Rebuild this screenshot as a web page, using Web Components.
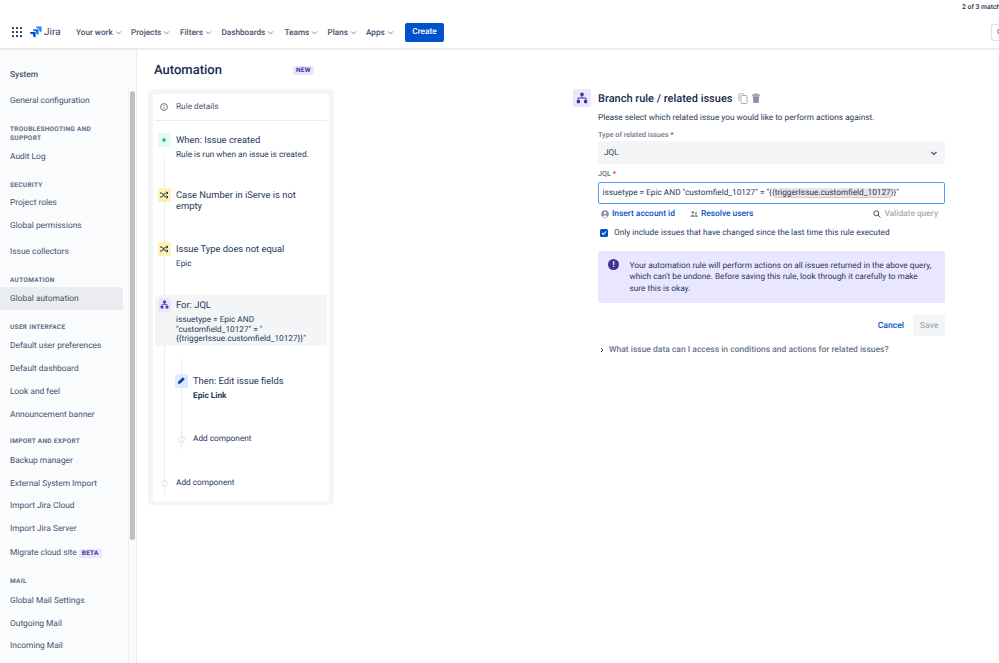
<!DOCTYPE html>
<html lang="en"><head><meta charset="utf-8"><title>Automation</title>
<style>
html,body{margin:0;padding:0;width:999px;height:663px;overflow:hidden;background:#fff;font-family:Roboto,"Liberation Sans",sans-serif;color:#172b4d;text-rendering:geometricPrecision}
jira-app{display:block}
</style></head><body>
<jira-app></jira-app>
<script>
function def(name, css, html){
  customElements.define(name, class extends HTMLElement{
    connectedCallback(){
      if(this.shadowRoot) return;
      const r=this.attachShadow({mode:'open'});
      const a=k=>this.getAttribute(k)||'';
      r.innerHTML='<style>'+css+'</style>'+(typeof html==='function'?html(a):html);
    }
  });
}
const chev='<svg width="7" height="7" viewBox="0 0 8 8" fill="none" stroke="#6b778c" stroke-width="1" style="flex:none"><path d="M1.2 2.8 4 5.6l2.8-2.8"/></svg>';

def('nav-link',':host{display:inline-flex;align-items:center;gap:2px;font-size:8.200px;font-weight:500;color:#42526e;white-space:nowrap;padding-top:1px}',
  a=>'<slot></slot>'+chev);

def('jira-header',`
:host{display:block;height:50px;box-sizing:border-box;border-bottom:2px solid #ebecf0;background:#fff;overflow:hidden}
.strip{height:14px;font-size:6.800px;line-height:14px;color:#172b4d;white-space:nowrap;padding-left:962px;box-sizing:border-box;font-weight:500}
.bar{height:36px;display:flex;align-items:center}
.grid{margin-left:12px;display:grid;grid-template-columns:repeat(3,2.4px);gap:1.4px;width:10px;flex:none}
.grid i{width:2.4px;height:2.4px;background:#253858;border-radius:.5px}
.logo{display:flex;align-items:center;margin-left:7px;gap:2px;font-size:10px;color:#344563;width:30px;flex:none;font-weight:400}
.logo svg{flex:none}
nav{display:flex;margin-left:17px;flex:1;align-items:center}
nav-link:nth-child(1){width:55px}nav-link:nth-child(2){width:49px}nav-link:nth-child(3){width:41.5px}nav-link:nth-child(4){width:63px}nav-link:nth-child(5){width:43px}nav-link:nth-child(6){width:38.5px}nav-link:nth-child(7){width:39px}
.create{background:#0052cc;color:#fff;border:0;border-radius:2px;width:39px;height:19px;font:500 8.4px Roboto,sans-serif;padding:0;text-rendering:geometricPrecision}
.search{flex:none;width:8px;height:17px;box-sizing:border-box;border:1px solid #dfe1e6;border-right:0;border-radius:3px 0 0 3px;display:flex;align-items:center;padding-left:5px;overflow:hidden}
`,`<div class="strip">2 of 3 match</div>
<div class="bar"><div class="grid">${'<i></i>'.repeat(9)}</div>
<div class="logo"><svg width="13" height="12" viewBox="0 0 13 12"><path d="M7 .5h5.600v5.400c-1.600 0-2.600-1-2.600-2.400V2.600H8.500C7.800 2.600 7 1.800 7 .5Z" fill="#2684ff"/><path d="M4 3.200h5.600v5.400C8 8.600 7 7.600 7 6.200V5.300H5.500C4.800 5.300 4 4.500 4 3.200Z" fill="#1a6fe8"/><path d="M1 6h5.600v5.500C5 11.500 4 10.500 4 9.100V8.100H2.500C1.800 8.100 1 7.300 1 6Z" fill="#0052cc"/></svg><span>Jira</span></div>
<nav><nav-link>Your work</nav-link><nav-link>Projects</nav-link><nav-link>Filters</nav-link><nav-link>Dashboards</nav-link><nav-link>Teams</nav-link><nav-link>Plans</nav-link><nav-link>Apps</nav-link><button class="create">Create</button></nav>
<div class="search"><svg width="8" height="8" viewBox="0 0 8 8" fill="none" stroke="#6b778c" stroke-width="1" style="flex:none"><circle cx="3.500" cy="3.500" r="2.800"/></svg></div></div>`);

def('side-head',':host{display:block;font-size:6.500px;line-height:9px;font-weight:700;color:#5e6c84;letter-spacing:.3px;text-transform:uppercase;padding:0 10px;width:100px}','<slot></slot>');
def('side-item',`:host{display:flex;align-items:center;height:22.8px;margin:0 13px 0 0;padding:0 0 0 10px;font-size:8.400px;color:#42526e;white-space:nowrap;border-radius:2px}
:host([active]){background:#ebecf0}
`,'<slot></slot>');
def('mini-badge',`:host{display:inline-block;background:#eae6ff;color:#403294;font-size:6.500px;font-weight:700;line-height:9px;padding:0 3px;border-radius:2px;letter-spacing:.2px}`,'<slot></slot>');

def('side-bar',`
:host{display:block;width:137px;flex:none;height:613px;box-sizing:border-box;background:#fafbfc;border-right:1px solid #ebecf0;position:relative;overflow:hidden;padding-top:18.500px}
.title{font-size:8.400px;font-weight:500;color:#42526e;padding-left:10px;line-height:12px;margin-bottom:9.500px}
.thumb{position:absolute;left:130px;top:41px;width:5px;height:449px;background:#bfbfbf;border-radius:3px}
.track{position:absolute;left:128px;top:38px;width:8px;bottom:0;border-left:1px solid #f0f1f3}
side-head{margin-top:12px;margin-bottom:2.500px}
.m1{margin-top:3px}
`,`<div class="title">System</div>
<side-item>General configuration</side-item>
<side-head>Troubleshooting and support</side-head>
<side-item>Audit Log</side-item>
<side-head style="margin-top:12.500px;margin-bottom:2.500px">Security</side-head>
<side-item>Project roles</side-item>
<side-item>Global permissions</side-item>
<side-item class="m1">Issue collectors</side-item>
<side-head style="margin-top:13px;margin-bottom:2px">Automation</side-head>
<side-item active>Global automation</side-item>
<side-head style="margin-top:12.500px;margin-bottom:3px">User interface</side-head>
<side-item>Default user preferences</side-item>
<side-item>Default dashboard</side-item>
<side-item>Look and feel</side-item>
<side-item>Announcement banner</side-item>
<side-head style="margin-top:11.500px;margin-bottom:3px">Import and export</side-head>
<side-item>Backup manager</side-item>
<side-item>External System Import</side-item>
<side-item>Import Jira Cloud</side-item>
<side-item>Import Jira Server</side-item>
<side-item style="margin-top:1px">Migrate cloud site&nbsp;<mini-badge>BETA</mini-badge></side-item>
<side-head style="margin-top:13px;margin-bottom:3px">Mail</side-head>
<side-item>Global Mail Settings</side-item>
<side-item>Outgoing Mail</side-item>
<side-item>Incoming Mail</side-item>
<div class="track"></div><div class="thumb"></div>`);

const icons={
 plus:'<svg width="8" height="8" viewBox="0 0 8 8"><path d="M4 1.800v4.400M1.800 4h4.400" stroke="#00875a" stroke-width=".9"/></svg>',
 shuffle:'<svg width="10" height="10" viewBox="0 0 10 10" fill="none" stroke="#172b4d" stroke-width="1"><path d="M1 3h1.800l3.600 4H9M1 7h1.800l3.600-4H9"/><path d="M7.600 1.700 9 3 7.600 4.300M7.600 5.700 9 7 7.600 8.300"/></svg>',
 branch:'<svg width="9" height="9" viewBox="0 0 9 9" fill="#5243aa"><rect x="3.100" y=".6" width="2.800" height="2.800" rx=".6"/><rect x=".6" y="5.700" width="2.800" height="2.800" rx=".6"/><rect x="5.600" y="5.700" width="2.800" height="2.800" rx=".6"/><path d="M4.100 3h.8v1.300h1.900l.6.300v1.600h-.8V5.100H2.400v1.100h-.8V4.600l.6-.3h1.900z"/></svg>',
 pen:'<svg width="9" height="9" viewBox="0 0 9 9" fill="#0747a6"><path d="M5.800 1.200 7.800 3.200 3.400 7.600 1 8 1.400 5.600z"/></svg>'
};
def('rule-step',`
:host{display:flex;gap:5px;align-items:flex-start;position:relative;color:#253858}
.ic{flex:none;width:13.500px;height:13.500px;border-radius:2px;display:flex;align-items:center;justify-content:center;position:relative}
.ic.green{background:#e3fcef}.ic.yellow{background:#fff0b3}.ic.purple{background:#eae6ff}.ic.blue{background:#deebff}
.body{min-width:0;flex:1}
.t{font-size:9.400px;line-height:11.500px;color:#253858;margin-top:1.500px;max-width:135px}
.d{font-size:8.250px;line-height:9.600px;color:#253858;margin-top:5px}
.d.b{font-weight:700}
`,a=>`<div class="ic ${a('tone')}">${icons[a('icon')]}</div><div class="body"><div class="t">${a('title')}</div>${a('desc')?`<div class="d ${a('bold')?'b':''}">${a('desc')}</div>`:''}</div>`);
def('add-step',`:host{display:flex;gap:5px;align-items:center;font-size:8.250px;color:#253858;height:11px}
.ic{flex:none;width:13.500px;display:flex;justify-content:center}
i{display:block;width:7px;height:7px;box-sizing:border-box;border:1px solid #dfe1e6;border-radius:50%;background:#fff}`,
 '<div class="ic"><i></i></div><slot></slot>');

def('rule-panel',`
:host{display:block;width:186px;height:416px;box-sizing:border-box;flex:none;background:#f4f5f7;border-radius:4px;padding:5px 5px 4px}
.in{height:100%;background:#fff;border-radius:3px;box-sizing:border-box;position:relative;overflow:hidden}
.det{height:27px;margin:0 2px;display:flex;align-items:center;gap:8px;padding:0 0 1px 5px;box-sizing:border-box;border-bottom:1px solid #ebecf0;font-size:8.250px;color:#42526e}
.flow{position:relative;padding:0 2px}
.line{position:absolute;left:10.500px;top:25px;height:336px;width:1.500px;background:#ebecf0}
.line2{position:absolute;left:27.500px;top:225px;height:92px;width:1.500px;background:#ebecf0}
rule-step{position:relative;padding-left:2.500px}
.s1{margin-top:12px}
.s2{margin-top:27.500px}
.s3{margin-top:29.500px}
.hl{background:#f4f5f7;border-radius:2px;height:51px;margin-top:25.500px;padding-top:3px;box-sizing:border-box}
.s5{margin-top:28px;margin-left:17px}
.a1{margin-top:32px;margin-left:19.500px}
.a2{margin-top:33px;margin-left:2.500px}
`,`<div class="in"><div class="det"><svg width="8" height="8" viewBox="0 0 8 8" fill="none" stroke="#42526e" stroke-width=".8"><circle cx="4" cy="4" r="3.400"/><path d="M4 3.500v2.200M4 2v.9"/></svg>Rule details</div>
<div class="flow"><div class="line"></div><div class="line2"></div>
<rule-step class="s1" tone="green" icon="plus" title="When: Issue created" desc="Rule is run when an issue is created."></rule-step>
<rule-step class="s2" tone="yellow" icon="shuffle" title="Case Number in iServe is not empty"></rule-step>
<rule-step class="s3" tone="yellow" icon="shuffle" title="Issue Type does not equal" desc="Epic"></rule-step>
<rule-step class="hl" tone="purple" icon="branch" title="For: JQL" desc='issuetype = Epic AND "customfield_10127" = "{{triggerIssue.customfield_10127}}"'></rule-step>
<rule-step class="s5" tone="blue" icon="pen" title="Then: Edit issue fields" desc="Epic Link" bold="1"></rule-step>
<add-step class="a1">Add component</add-step>
<add-step class="a2">Add component</add-step>
</div></div>`);

def('branch-panel',`
:host{display:block;width:372px;flex:none;font-size:8.250px;color:#253858}
.head{display:flex;align-items:center;height:18px}
.hi{width:18px;height:18px;background:#eae6ff;border-radius:2px;display:flex;align-items:center;justify-content:center;margin-right:7px}
h2{margin:0;font-size:11px;font-weight:500;color:#172b4d;white-space:nowrap;margin-right:6px}
.main{margin-left:25px}
p{margin:6px 0 0;line-height:11px}
label{display:block;font-size:7.200px;font-weight:500;color:#6b778c;line-height:10px}
label b{color:#de350b;font-weight:700}
.sel{height:23px;background:#f4f5f7;border-radius:3px;display:flex;align-items:center;justify-content:space-between;padding:0 7px 0 6px;margin-top:1px;color:#253858}
.inp{height:22px;box-sizing:border-box;border:1.500px solid #4c9aff;border-radius:2px;margin-top:3px;display:flex;align-items:center;padding-left:3.500px;color:#253858;white-space:nowrap}
mark{background:linear-gradient(#e4e6ea 0 85%,#ffbdad 85%);color:inherit}
.links{display:flex;align-items:center;height:20px;color:#0052cc;font-weight:500;padding-left:3px;font-size:8.400px}
.links span{display:flex;align-items:center;gap:3px}
.links .v{margin-left:auto;color:#a5adba;padding-right:7px;gap:3px}
.chk{display:flex;align-items:center;gap:6px;height:10px;margin-top:4px;padding-left:2px}
.box{width:8px;height:8px;background:#0052cc;border-radius:1.500px;display:flex;align-items:center;justify-content:center}
.banner{margin-top:13px;height:52px;background:#eae6ff;border-radius:2px;display:flex;box-sizing:border-box;padding:10px 12px 0 10px;gap:10.500px;line-height:11.300px;color:#253858}
.ex{flex:none;width:11px;height:11px;border-radius:50%;background:#403294;color:#fff;display:flex;align-items:center;justify-content:center;font-size:8px;font-weight:700;line-height:11px;margin-top:-2px}
.btns{display:flex;justify-content:flex-end;align-items:center;margin-top:12px;gap:9px;font-size:8.600px}
.cancel{color:#0052cc;font-weight:500}
.save{width:32px;height:21px;background:#f4f5f7;border-radius:2px;display:flex;align-items:center;justify-content:center;color:#a5adba;font-weight:500}
.more{display:flex;align-items:center;gap:4px;margin-top:8px;color:#6b778c;font-weight:500;height:11px;padding-left:1px;font-size:8.500px}
`,`<div class="head"><div class="hi"><svg width="12" height="12" viewBox="0 0 12 12" fill="#403294"><rect x="4.400" y=".7" width="3.200" height="3.200" rx=".7"/><rect x=".8" y="8" width="3.200" height="3.200" rx=".7"/><rect x="8" y="8" width="3.200" height="3.200" rx=".7"/><path d="M5.500 3.500h1v2h3.200l.7.700v2.200h-1V6.500H2.600v1.900h-1V6.200l.7-.7h3.200z"/></svg></div><h2>Branch rule / related issues</h2>
<svg width="10" height="11" viewBox="0 0 10 11" fill="none" stroke="#a5adba" stroke-width="1"><rect x="3" y="2.500" width="6" height="8" rx="1"/><path d="M1 8V1.500C1 1 1.300.8 1.800.8H6"/></svg>
<svg style="margin-left:3px" width="10" height="10" viewBox="0 0 10 10" fill="#8993a4"><path d="M1 1.500h8v1.200H1zM3.500.4h3v1.200h-3zM1.700 3.300h6.600L7.700 9.500c0 .3-.3.5-.6.500H2.900c-.3 0-.6-.2-.6-.5z"/></svg></div>
<div class="main"><p>Please select which related issue you would like to perform actions against.</p>
<label style="margin-top:6px">Type of related issues <b>*</b></label>
<div class="sel">JQL<svg width="8" height="8" viewBox="0 0 8 8" fill="none" stroke="#42526e" stroke-width="1.200"><path d="M1.500 3 4 5.400 6.500 3"/></svg></div>
<label style="margin-top:5px">JQL <b>*</b></label>
<div class="inp"><span>issuetype = Epic AND "customfield_10127" = "{{<mark>triggerIssue.customfield_10127</mark>}}"</span></div>
<div class="links"><span><svg width="8" height="8" viewBox="0 0 8 8"><circle cx="4" cy="4" r="3.800" fill="#8993a4"/><circle cx="4" cy="3" r="1.300" fill="#fff"/><path d="M1.700 6.500C2.200 5 5.800 5 6.300 6.500 5.500 7.400 2.500 7.400 1.700 6.500Z" fill="#fff"/></svg>Insert account id</span>
<span style="margin-left:15px"><svg width="8" height="8" viewBox="0 0 8 8" fill="#8993a4"><circle cx="2.800" cy="2.500" r="1.400"/><circle cx="6" cy="3" r="1.100"/><path d="M.5 7c0-3 4.500-3 4.500 0zM5.500 7c0-1.500-.2-2-.6-2.600 1.600-.5 2.800.6 2.800 2.600z"/></svg>Resolve users</span>
<span class="v"><svg width="8" height="8" viewBox="0 0 8 8" fill="none" stroke="#42526e" stroke-width="1"><circle cx="3.300" cy="3.300" r="2.500"/><path d="M5.200 5.200 7.500 7.500"/></svg>Validate query</span></div>
<div class="chk"><div class="box"><svg width="6" height="6" viewBox="0 0 6 6" fill="none" stroke="#fff" stroke-width="1.100"><path d="M1 3 2.500 4.500 5 1.500"/></svg></div>Only include issues that have changed since the last time this rule executed</div>
<div class="banner"><div class="ex">!</div><div>Your automation rule will perform actions on all issues returned in the above query, which can't be undone. Before saving this rule, look through it carefully to make sure this is okay.</div></div>
<div class="btns"><span class="cancel">Cancel</span><span class="save">Save</span></div>
<div class="more"><svg width="6" height="6" viewBox="0 0 6 6" fill="none" stroke="#42526e" stroke-width="1"><path d="M2 1 4 3 2 5"/></svg>What issue data can I access in conditions and actions for related issues?</div>
</div>`);

def('jira-app',`
:host{display:block;width:999px;height:663px;overflow:hidden}
.row{display:flex;height:613px}
main{flex:1;min-width:0;padding:10px 0 0 11px;box-sizing:border-box}
.title{display:flex;align-items:center;height:20px;margin-left:6px}
h1{margin:0;font-size:13px;font-weight:500;color:#172b4d;width:139px;white-space:nowrap}
.cols{display:flex;margin-top:9px}
branch-panel{margin-left:239px}
`,`<jira-header></jira-header><div class="row"><side-bar></side-bar><main>
<div class="title"><h1>Automation</h1><mini-badge>NEW</mini-badge></div>
<div class="cols"><rule-panel></rule-panel><branch-panel></branch-panel></div></main></div>`);
</script>
</body></html>
